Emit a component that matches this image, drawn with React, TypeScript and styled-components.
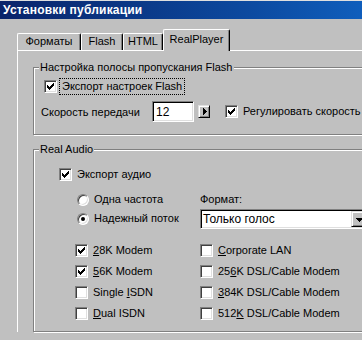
import styled, { createGlobalStyle } from 'styled-components';

const GlobalStyle = createGlobalStyle`
    html, body {
        margin: 0;
        padding: 0;
        background: #c0c0c0;
    }
    body {
        font-family: "Liberation Sans", Arial, sans-serif;
        font-size: 11px;
        color: #000;
    }
`

const Viewport = styled.div`
    width: 362px;
    height: 340px;
    overflow: hidden;
    background: #c0c0c0;
`
const Window = styled.div`
    width: 440px;
    border-top: 1px solid #dfdfdf;
    display: flex;
    flex-direction: column;
`
const TitleBar = styled.div`
    height: 18px;
    line-height: 18px;
    padding-left: 3px;
    background: linear-gradient(90deg, #0a246a 0px, #0c4aa0 250px, #0f5ebc 362px, #3a80d0 440px);
    color: #fff;
    font-weight: bold;
    font-size: 12px;
    letter-spacing: 0.2px;
`
const Body = styled.div`
    padding: 10px 0 0 17px;
    display: flex;
    flex-direction: column;
`
const TabRow = styled.div`
    height: 21px;
    display: flex;
    align-items: flex-end;
    position: relative;
    z-index: 1;
`
const Tab = styled.div<{ $w: number; $active?: boolean }>`
    width: ${p => p.$w}px;
    height: ${p => (p.$active ? 22 : 17)}px;
    margin-bottom: ${p => (p.$active ? -1 : 0)}px;
    box-sizing: border-box;
    background: #c0c0c0;
    border-top: 1px solid #fff;
    border-left: 1px solid #fff;
    border-right: 1px solid #000;
    border-top-left-radius: 2px;
    border-top-right-radius: 2px;
    box-shadow: inset -1px 0 0 #808080;
    display: flex;
    justify-content: center;
    padding-top: ${p => (p.$active ? 3 : 1)}px;
    line-height: 13px;
`
const Panel = styled.div`
    border-top: 1px solid #fff;
    border-left: 1px solid #fff;
    padding: 0 0 0 15px;
    display: flex;
    flex-direction: column;
`
const Group = styled.div<{ $top: number; $height: number }>`
    margin-top: ${p => p.$top}px;
    height: ${p => p.$height}px;
    box-sizing: border-box;
    border: 1px solid #808080;
    box-shadow: inset 1px 1px 0 #fff, 1px 1px 0 #fff;
    display: flex;
    flex-direction: column;
`
const Legend = styled.div`
    align-self: flex-start;
    margin: -7px 0 0 5px;
    padding: 0 1px;
    line-height: 13px;
    background: #c0c0c0;
`
const Row = styled.div<{ $top: number; $left: number }>`
    margin: ${p => p.$top}px 0 0 ${p => p.$left}px;
    display: flex;
    align-items: center;
    height: 15px;
`
const BoxLabel = styled.span<{ $focus?: boolean }>`
    margin-left: 4px;
    padding: 0 1px;
    line-height: 13px;
    outline: ${p => (p.$focus ? '1px dotted #000' : 'none')};
    outline-offset: 1px;
    white-space: nowrap;
`
const CheckBox = styled.span`
    width: 13px;
    height: 13px;
    box-sizing: border-box;
    flex: none;
    background: #fff;
    border-style: solid;
    border-width: 1px;
    border-color: #808080 #fff #fff #808080;
    box-shadow: inset 1px 1px 0 #404040, inset -1px -1px 0 #dfdfdf;
    display: flex;
    align-items: center;
    justify-content: center;
`
const RadioDot = styled.span`
    width: 12px;
    height: 12px;
    box-sizing: border-box;
    flex: none;
    border-radius: 50%;
    background: #fff;
    border-style: solid;
    border-width: 1px;
    border-color: #808080 #fff #fff #808080;
    box-shadow: inset 1px 1px 0 #404040, inset -1px -1px 0 #dfdfdf;
    display: flex;
    align-items: center;
    justify-content: center;
`
const Dot = styled.span`
    width: 4px;
    height: 4px;
    border-radius: 50%;
    background: #000;
`
const SpeedRow = styled.div`
    margin: 7px 0 0 7px;
    height: 21px;
    display: flex;
    align-items: center;
`
const FieldLabel = styled.span<{ $w: number }>`
    width: ${p => p.$w}px;
    flex: none;
    white-space: nowrap;
`
const Sunken = styled.div<{ $w: number; $h: number }>`
    width: ${p => p.$w}px;
    height: ${p => p.$h}px;
    box-sizing: border-box;
    background: #fff;
    border-style: solid;
    border-width: 1px;
    border-color: #808080 #fff #fff #808080;
    box-shadow: inset 1px 1px 0 #000, inset -1px -1px 0 #dfdfdf;
    display: flex;
    align-items: center;
    padding-left: 3px;
    font-size: 12px;
    white-space: nowrap;
`
const RaisedButton = styled.div<{ $w: number; $h: number }>`
    width: ${p => p.$w}px;
    height: ${p => p.$h}px;
    box-sizing: border-box;
    flex: none;
    background: #c0c0c0;
    border-style: solid;
    border-width: 1px;
    border-color: #dfdfdf #000 #000 #dfdfdf;
    box-shadow: inset 1px 1px 0 #fff, inset -1px -1px 0 #808080;
    display: flex;
    align-items: center;
    justify-content: center;
`
const FormatArea = styled.div`
    margin: 10px 0 0 41px;
    display: grid;
    grid-template-columns: 125px 1fr;
`
const RadioList = styled.div`
    display: flex;
    flex-direction: column;
    gap: 4px;
    padding-left: 2px;
`
const FormatColumn = styled.div`
    display: flex;
    flex-direction: column;
`
const FormatCaption = styled.span`
    line-height: 13px;
    margin-top: 1px;
`
const Select = styled(Sunken)`
    margin-top: 3px;
    padding-left: 2px;
    padding-right: 2px;
    justify-content: space-between;
`
const ConnGrid = styled.div`
    margin: 11px 0 0 41px;
    display: grid;
    grid-template-columns: 125px 1fr;
    grid-auto-rows: 21px;
    align-items: center;
`

const Check = ({ on }: { on?: boolean }) => (
    <CheckBox>
        {on && (
            <svg width="7" height="7" viewBox="0 0 7 7" shapeRendering="crispEdges">
                <path d="M0 2h1v3h-1z M1 3h1v3h-1z M2 4h1v3h-1z M3 3h1v3h-1z M4 2h1v3h-1z M5 1h1v3h-1z M6 0h1v3h-1z" fill="#000" />
            </svg>
        )}
    </CheckBox>
)

const CheckItem = ({ on, children, focus }: { on?: boolean; children: React.ReactNode; focus?: boolean }) => (
    <Row $top={0} $left={0}>
        <Check on={on} />
        <BoxLabel $focus={focus}>{children}</BoxLabel>
    </Row>
)

const Arrow = ({ dir }: { dir: 'right' | 'down' }) => (
    <svg width="7" height="7" viewBox="0 0 7 7" shapeRendering="crispEdges">
        {dir === 'right'
            ? <path d="M2 0h1v7h-1z M3 1h1v5h-1z M4 2h1v3h-1z M5 3h1v1h-1z" fill="#000" />
            : <path d="M0 2h7v1h-7z M1 3h5v1h-5z M2 4h3v1h-3z M3 5h1v1h-1z" fill="#000" />}
    </svg>
)

export default function App() {
    return (
        <Viewport>
            <GlobalStyle />
            <Window>
                <TitleBar>Установки публикации</TitleBar>
                <Body>
                    <TabRow>
                        <Tab $w={64}>Форматы</Tab>
                        <Tab $w={42}>Flash</Tab>
                        <Tab $w={40}>HTML</Tab>
                        <Tab $w={67} $active>RealPlayer</Tab>
                    </TabRow>
                    <Panel>
                        <Group $top={16} $height={68}>
                            <Legend>Настройка полосы пропускания Flash</Legend>
                            <Row $top={5} $left={10}>
                                <Check on />
                                <BoxLabel $focus>Экспорт настроек Flash</BoxLabel>
                            </Row>
                            <SpeedRow>
                                <FieldLabel $w={111}>Скорость передачи</FieldLabel>
                                <Sunken $w={42} $h={21}>12</Sunken>
                                <RaisedButton $w={12} $h={13} style={{ marginLeft: 4 }}>
                                    <Arrow dir="right" />
                                </RaisedButton>
                                <Row $top={0} $left={15}>
                                    <Check on />
                                    <BoxLabel>Регулировать скорость передачи</BoxLabel>
                                </Row>
                            </SpeedRow>
                        </Group>
                        <Group $top={14} $height={183}>
                            <Legend>Real Audio</Legend>
                            <Row $top={11} $left={25}>
                                <Check on />
                                <BoxLabel>Экспорт аудио</BoxLabel>
                            </Row>
                            <FormatArea>
                                <RadioList>
                                    <Row $top={0} $left={0}>
                                        <RadioDot />
                                        <BoxLabel>Одна частота</BoxLabel>
                                    </Row>
                                    <Row $top={0} $left={0}>
                                        <RadioDot><Dot /></RadioDot>
                                        <BoxLabel>Надежный поток</BoxLabel>
                                    </Row>
                                </RadioList>
                                <FormatColumn>
                                    <FormatCaption>Формат:</FormatCaption>
                                    <Select $w={170} $h={20}>
                                        <span>Только голос</span>
                                        <RaisedButton $w={16} $h={16}>
                                            <Arrow dir="down" />
                                        </RaisedButton>
                                    </Select>
                                </FormatColumn>
                            </FormatArea>
                            <ConnGrid>
                                <CheckItem on><u>2</u>8K Modem</CheckItem>
                                <CheckItem><u>C</u>orporate LAN</CheckItem>
                                <CheckItem on><u>5</u>6K Modem</CheckItem>
                                <CheckItem>25<u>6</u>K DSL/Cable Modem</CheckItem>
                                <CheckItem>Single <u>I</u>SDN</CheckItem>
                                <CheckItem><u>3</u>84K DSL/Cable Modem</CheckItem>
                                <CheckItem><u>D</u>ual ISDN</CheckItem>
                                <CheckItem>512<u>K</u> DSL/Cable Modem</CheckItem>
                            </ConnGrid>
                        </Group>
                    </Panel>
                </Body>
            </Window>
        </Viewport>
    );
}
